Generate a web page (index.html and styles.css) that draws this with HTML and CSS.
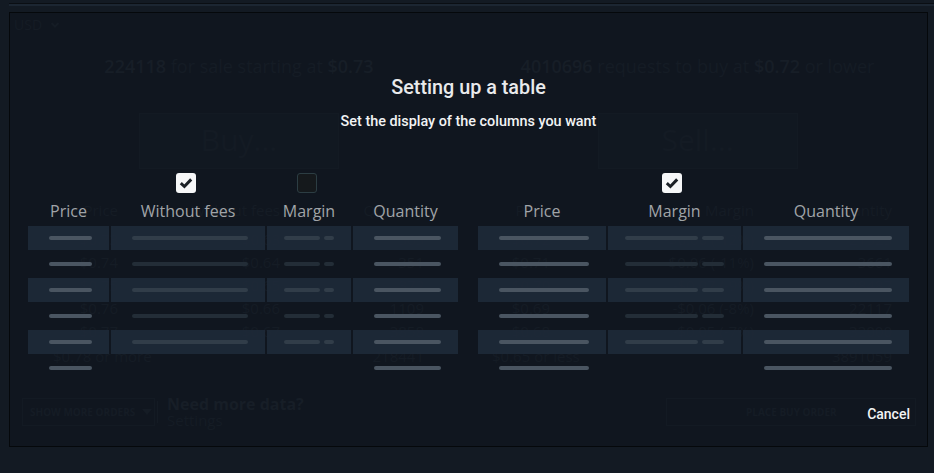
FILE: index.html
```html
<!DOCTYPE html>
<html lang="en">
<head>
<meta charset="utf-8">
<title>Setting up a table</title>
<link rel="stylesheet" href="styles.css">
</head>
<body>
<div class="topbar"></div>
<div class="panel">
  <div class="currency">USD <svg class="chev" width="10" height="8" viewBox="0 0 10 8"><path d="M1.5 2 L5 5.5 L8.5 2" fill="none" stroke="currentColor" stroke-width="2"/></svg></div>
  <div class="halves">
    <section class="half">
      <p class="summary"><b>224118</b> for sale starting at <b>$0.73</b></p>
      <div class="bigbtn">Buy...</div>
      <div class="otable otable-left">
        <span>Price</span><span>Without fees</span><span>Quantity</span>
        <span>$0.73</span><span>$0.63</span><span>363</span>
        <span>$0.74</span><span>$0.64</span><span>351</span>
        <span>$0.75</span><span>$0.65</span><span>372</span>
        <span>$0.76</span><span>$0.66</span><span>1109</span>
        <span>$0.77</span><span>$0.67</span><span>3858</span>
        <span class="more">$0.78 or more</span><span>218441</span>
      </div>
      <div class="foot">
        <div class="showmore">SHOW MORE ORDERS <svg width="10" height="6" viewBox="0 0 10 6"><path d="M0 0 H10 L5 6 Z" fill="currentColor"/></svg></div>
        <div class="sep"></div>
        <div class="needmore"><b>Need more data?</b><span>Settings</span></div>
      </div>
    </section>
    <section class="half">
      <p class="summary"><b>4010696</b> requests to buy at <b>$0.72</b> or lower</p>
      <div class="bigbtn">Sell...</div>
      <div class="otable otable-right">
        <span>Price</span><span>Margin</span><span>Quantity</span>
        <span>$0.72</span><span>-$0.06 (-12%)</span><span>21523</span>
        <span>$0.71</span><span>-$0.06 (-11%)</span><span>3661</span>
        <span>$0.70</span><span>-$0.07 (-9%)</span><span>28487</span>
        <span>$0.69</span><span>-$0.06 (-8%)</span><span>22117</span>
        <span>$0.68</span><span>-$0.05 (-7%)</span><span>32000</span>
        <span class="more">$0.65 or less</span><span>3891059</span>
      </div>
      <div class="foot foot-right">
        <div class="placebtn">PLACE BUY ORDER</div>
      </div>
    </section>
  </div>
</div>

<div class="overlay">
  <h1 class="title">Setting up a table</h1>
  <p class="subtitle">Set the display of the columns you want</p>
  <div class="tables">
    <div class="grid grid-left">
      <div class="slot"></div>
      <div class="slot"><span class="cb on"><svg width="20" height="20" viewBox="0 0 20 20"><path d="M4.8 10.2 L8.4 13.5 L15.2 6.4" fill="none" stroke="#1b2026" stroke-width="3"/></svg></span></div>
      <div class="slot"><span class="cb off"></span></div>
      <div class="slot"></div>

      <div class="hd">Price</div><div class="hd">Without fees</div><div class="hd">Margin</div><div class="hd">Quantity</div>

      <div class="c blk"><i class="b hi w43"></i></div><div class="c blk"><i class="b md w116"></i></div><div class="c blk pair"><i class="b md w36"></i><i class="b md w10"></i></div><div class="c blk"><i class="b hi w67"></i></div>
      <div class="c"><i class="b hi w43"></i></div><div class="c"><i class="b lo w116"></i></div><div class="c pair"><i class="b lo w36"></i><i class="b lo w10"></i></div><div class="c"><i class="b hi w67"></i></div>
      <div class="c blk"><i class="b hi w43"></i></div><div class="c blk"><i class="b md w116"></i></div><div class="c blk pair"><i class="b md w36"></i><i class="b md w10"></i></div><div class="c blk"><i class="b hi w67"></i></div>
      <div class="c"><i class="b hi w43"></i></div><div class="c"><i class="b lo w116"></i></div><div class="c pair"><i class="b lo w36"></i><i class="b lo w10"></i></div><div class="c"><i class="b hi w67"></i></div>
      <div class="c blk"><i class="b hi w43"></i></div><div class="c blk"><i class="b md w116"></i></div><div class="c blk pair"><i class="b md w36"></i><i class="b md w10"></i></div><div class="c blk"><i class="b hi w67"></i></div>
      <div class="c"><i class="b hi w43"></i></div><div class="c"></div><div class="c"></div><div class="c"><i class="b hi w67"></i></div>
    </div>

    <div class="grid grid-right">
      <div class="slot"></div>
      <div class="slot"><span class="cb on"><svg width="20" height="20" viewBox="0 0 20 20"><path d="M4.8 10.2 L8.4 13.5 L15.2 6.4" fill="none" stroke="#1b2026" stroke-width="3"/></svg></span></div>
      <div class="slot"></div>

      <div class="hd">Price</div><div class="hd">Margin</div><div class="hd">Quantity</div>

      <div class="c blk"><i class="b hi w90"></i></div><div class="c blk pair"><i class="b md w73"></i><i class="b md w22"></i></div><div class="c blk"><i class="b hi w128"></i></div>
      <div class="c"><i class="b hi w90"></i></div><div class="c pair"><i class="b lo w73"></i><i class="b lo w22"></i></div><div class="c"><i class="b hi w128"></i></div>
      <div class="c blk"><i class="b hi w90"></i></div><div class="c blk pair"><i class="b md w73"></i><i class="b md w22"></i></div><div class="c blk"><i class="b hi w128"></i></div>
      <div class="c"><i class="b hi w90"></i></div><div class="c pair"><i class="b lo w73"></i><i class="b lo w22"></i></div><div class="c"><i class="b hi w128"></i></div>
      <div class="c blk"><i class="b hi w90"></i></div><div class="c blk pair"><i class="b md w73"></i><i class="b md w22"></i></div><div class="c blk"><i class="b hi w128"></i></div>
      <div class="c"><i class="b hi w90"></i></div><div class="c"></div><div class="c"><i class="b hi w128"></i></div>
    </div>
  </div>
  <div class="actions"><button class="cancel">Cancel</button></div>
</div>
</body>
</html>
```
FILE: styles.css
```css
* { box-sizing: border-box; }
html, body { margin: 0; padding: 0; }
body {
  background: #131a23;
  width: 934px;
  height: 473px;
  overflow: hidden;
  font-family: "Open Sans", "Noto Sans", sans-serif;
  position: relative;
}

.topbar {
  margin: 3px 0 0 9px;
  border-top: 1px solid #0a0e13;
  height: 3px;
  background: #1c2632;
}

.panel {
  margin: 6px 0 0 9px;
  width: 919px;
  height: 435px;
  border: 1px solid #05080b;
  background: #10161f;
  color: #151c25;
  padding: 2px 0 0 0;
}

.currency {
  padding-left: 4px;
  font-size: 14px;
  line-height: 20px;
  display: flex;
  align-items: center;
  gap: 8px;
}

.halves {
  display: grid;
  grid-template-columns: 458px 459px;
}

.half { display: flex; flex-direction: column; }

.summary {
  margin: 19px 0 0;
  text-align: center;
  font-size: 18px;
  line-height: 24px;
}
.summary b { font-weight: 600; color: #171e27; }

.bigbtn {
  align-self: center;
  margin-top: 35px;
  width: 200px;
  height: 56px;
  border: 1px solid #131a23;
  background: #111821;
  text-align: center;
  font-size: 30px;
  line-height: 52px;
  color: #141b24;
}

.otable {
  display: grid;
  margin-top: 30px;
  font-size: 15px;
  line-height: 23px;
  text-align: right;
}
.otable span:nth-child(-n+3) { line-height: 22px; margin-bottom: 7px; }
.otable-left { grid-template-columns: 108px 162px 144px; }
.otable-right { grid-template-columns: 82px 204px 138px; }
.otable .more { grid-column: span 2; text-align: left; padding-left: 43px; margin-top: 2px; }
.otable .more + span { margin-top: 2px; }
.otable-right .more { padding-left: 24px; }

.foot {
  margin-top: 30px;
  display: flex;
  align-items: center;
  padding-left: 12px;
  height: 28px;
}
.showmore {
  width: 133px;
  height: 28px;
  border: 1px solid #131a23;
  font-size: 10px;
  font-weight: 700;
  white-space: nowrap;
  display: flex;
  align-items: center;
  gap: 7px;
  padding-left: 7px;
}
.sep { width: 1px; height: 22px; background: #141b24; margin: 0 9px 0 2px; }
.needmore { display: flex; flex-direction: column; line-height: 16px; }
.needmore b { font-size: 16px; color: #171e27; }
.needmore span { font-size: 15px; }
.foot-right { padding-left: 198px; }
.placebtn {
  width: 250px;
  height: 28px;
  border: 1px solid #131a23;
  font-size: 10px;
  font-weight: 700;
  line-height: 26px;
  padding-left: 79px;
  white-space: nowrap;
}

/* modal overlay */
.overlay {
  position: absolute;
  left: 0; top: 0; right: 0; bottom: 0;
  padding: 77px 25px 0 28px;
  display: flex;
  flex-direction: column;
  font-family: Roboto, "Liberation Sans", sans-serif;
}
.title {
  margin: 0;
  text-align: center;
  font-size: 19.8px;
  line-height: 22px;
  font-weight: 500;
  color: #e9eaec;
}
.subtitle {
  margin: 15px 0 0;
  text-align: center;
  font-size: 14.4px;
  line-height: 16px;
  font-weight: 500;
  color: #f2f3f4;
}
.tables {
  margin-top: 43px;
  display: flex;
  gap: 20px;
}
.grid {
  display: grid;
  column-gap: 2px;
  row-gap: 2px;
  grid-template-rows: 20px 29px repeat(6, 24px);
}
.grid-left { grid-template-columns: 81px 154px 84px 105px; }
.grid-right { grid-template-columns: 128px 133px 166px; }

.slot { display: flex; justify-content: center; }
.cb {
  width: 20px;
  height: 20px;
  border-radius: 3px;
  margin-right: 5px;
  display: block;
}
.cb svg { display: block; }
.cb.on { background: #f6f7f8; }
.cb.off { background: #15191c; border: 1px solid #2c3d43; }

.hd {
  font-family: "Open Sans", "Noto Sans", sans-serif;
  font-size: 16px;
  line-height: 22px;
  padding-top: 5px;
  text-align: center;
  color: #a0a4a8;
}

.c {
  display: flex;
  align-items: center;
  justify-content: center;
}
.c.blk { background: rgba(29, 41, 56, 0.95); }
.c.pair { gap: 4px; }
.c:not(.pair) .b { margin-left: 4px; }

.b { display: block; height: 4px; border-radius: 2px; }
.b.hi { background: #4a5561; }
.b.md { background: #313d49; }
.b.lo { background: #232d37; }
.w10 { width: 10px; }
.w22 { width: 22px; }
.w36 { width: 36px; }
.w43 { width: 43px; }
.w67 { width: 67px; }
.w73 { width: 73px; }
.w90 { width: 90px; }
.w116 { width: 116px; }
.w128 { width: 128px; }

.actions {
  margin-top: 26px;
  display: flex;
  justify-content: flex-end;
  margin-right: -1px;
}
.cancel {
  font-family: Roboto, "Liberation Sans", sans-serif;
  font-size: 14px;
  line-height: 16px;
  font-weight: 500;
  color: #f2f3f4;
  background: none;
  border: 0;
  padding: 0;
}
```
